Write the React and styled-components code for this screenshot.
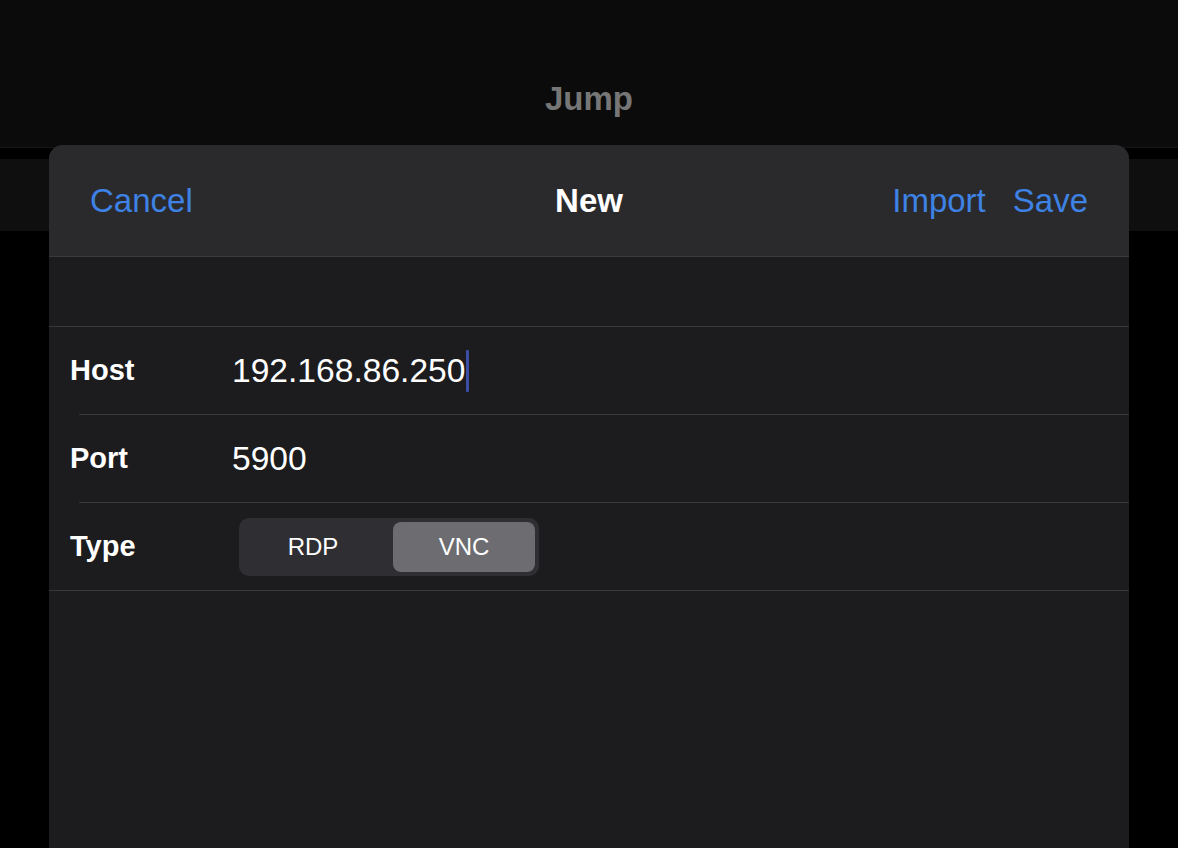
import React from 'react';
import styled, { createGlobalStyle } from 'styled-components';

const GlobalStyle = createGlobalStyle`
  html, body {
    margin: 0;
    padding: 0;
    background: #000;
  }
  body {
    font-family: "Liberation Sans", Arial, sans-serif;
    -webkit-font-smoothing: antialiased;
  }
`;

const Screen = styled.div`
  position: relative;
  width: 1178px;
  height: 848px;
  overflow: hidden;
  background: #000;
`;

const NavBar = styled.header`
  height: 148px;
  background: #0b0b0b;
  border-bottom: 1px solid #161616;
  display: flex;
  align-items: center;
  justify-content: center;
  box-sizing: border-box;
`;

const NavTitle = styled.h1`
  margin: 50px 0 0;
  font-size: 33px;
  font-weight: 700;
  color: #767676;
`;

const SearchBand = styled.div`
  margin-top: 11px;
  height: 72px;
  background: #0f0f0f;
`;

const Sheet = styled.section`
  position: absolute;
  top: 145px;
  left: 49px;
  width: 1080px;
  height: 740px;
  border-radius: 14px 14px 0 0;
  background: #1c1c1e;
  overflow: hidden;
`;

const SheetHeader = styled.div`
  height: 112px;
  background: #2a2a2d;
  border-bottom: 1px solid #3a3a3c;
  display: grid;
  grid-template-columns: 1fr auto 1fr;
  align-items: center;
  padding: 0 41px;
  box-sizing: border-box;
`;

const BarButton = styled.span`
  font-size: 33px;
  color: #3d82e4;
`;

const HeaderTitle = styled.span`
  font-size: 33px;
  font-weight: 700;
  color: #fff;
`;

const RightButtons = styled.div`
  display: flex;
  justify-content: flex-end;
  gap: 27px;
`;

const Spacer = styled.div`
  height: 69px;
  border-bottom: 1px solid #38383a;
`;

const Form = styled.div`
  border-bottom: 1px solid #38383a;
`;

const Row = styled.div`
  height: 87px;
  display: flex;
  align-items: center;
  padding-left: 21px;
`;

const Divider = styled.div`
  height: 1px;
  margin-left: 30px;
  background: #38383a;
`;

const Label = styled.span`
  width: 162px;
  flex-shrink: 0;
  font-size: 29px;
  font-weight: 700;
  color: #fff;
`;

const Value = styled.span`
  display: flex;
  align-items: center;
  font-size: 33.6px;
  color: #fff;
`;

const Caret = styled.span`
  display: inline-block;
  width: 3px;
  height: 42px;
  margin-left: 1px;
  background: #3a4ea8;
  border-radius: 1px;
`;

const Segmented = styled.div`
  margin-left: 7px;
  width: 300px;
  height: 58px;
  padding: 4px;
  box-sizing: border-box;
  display: grid;
  grid-template-columns: 150px 1fr;
  background: #2f2f33;
  border-radius: 10px;
`;

const Segment = styled.div`
  display: flex;
  align-items: center;
  justify-content: center;
  padding-right: ${(p) => (p.$active ? 0 : 10)}px;
  border-radius: 8px;
  font-size: 24px;
  color: #fff;
  background: ${(p) => (p.$active ? '#6c6c71' : 'transparent')};
`;

export default function App() {
  return (
    <Screen>
      <GlobalStyle />
      <NavBar>
        <NavTitle>Jump</NavTitle>
      </NavBar>
      <SearchBand />
      <Sheet>
        <SheetHeader>
          <BarButton>Cancel</BarButton>
          <HeaderTitle>New</HeaderTitle>
          <RightButtons>
            <BarButton>Import</BarButton>
            <BarButton>Save</BarButton>
          </RightButtons>
        </SheetHeader>
        <Spacer />
        <Form>
          <Row>
            <Label>Host</Label>
            <Value>
              192.168.86.250
              <Caret />
            </Value>
          </Row>
          <Divider />
          <Row>
            <Label>Port</Label>
            <Value>5900</Value>
          </Row>
          <Divider />
          <Row>
            <Label>Type</Label>
            <Segmented>
              <Segment>RDP</Segment>
              <Segment $active>VNC</Segment>
            </Segmented>
          </Row>
        </Form>
      </Sheet>
    </Screen>
  );
}
